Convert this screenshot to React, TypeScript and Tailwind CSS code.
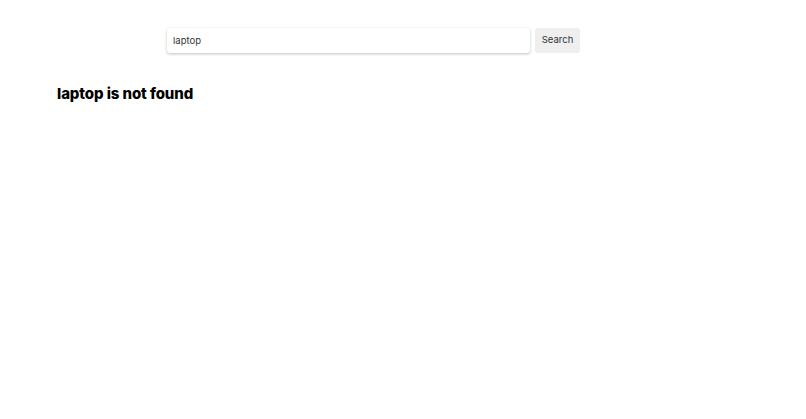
export default function App() {
  return (
    <div className="min-h-screen bg-white font-['Inter',sans-serif] text-black">
      <form className="flex items-center gap-[5px] pl-[167px] pt-[28px]">
        <input
          type="text"
          defaultValue="laptop"
          className="h-[25px] w-[363px] rounded-[3px] bg-white px-[6px] text-[9.5px] text-[#333] shadow-[0_1px_3px_rgba(0,0,0,0.25)] outline-none"
        />
        <button
          type="button"
          className="h-[25px] w-[45px] rounded-[3px] bg-[#efefef] text-[9.5px] text-[#333]"
        >
          Search
        </button>
      </form>
      <h1 className="pl-[57px] pt-[30px] text-[15px] leading-[22px] font-extrabold tracking-[-0.1px]">
        laptop is not found
      </h1>
    </div>
  );
}
